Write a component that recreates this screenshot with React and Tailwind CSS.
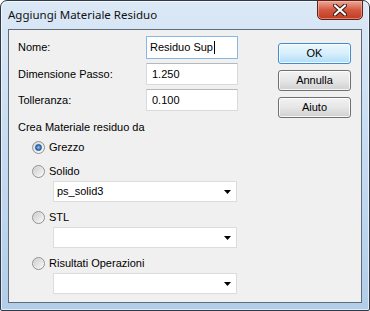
import React from "react";

const ui = { fontFamily: '"Liberation Sans", Arial, sans-serif' };
const titleFont = { fontFamily: '"Noto Sans", "Open Sans", sans-serif' };

function Radio({ checked }) {
  return (
    <div className="w-[13px] h-[13px] rounded-full border border-[#8f9194] bg-linear-to-br from-[#d6d6d6] to-[#fbfbfb] flex items-center justify-center shrink-0">
      {checked ? (
        <div className="w-[7px] h-[7px] rounded-full border border-[#1f4d84] bg-radial from-[#8cc6f2] via-[#3d86cf] to-[#1e5fa8]" />
      ) : (
        <div className="w-[9px] h-[9px] rounded-full bg-linear-to-br from-[#cfcfcf] to-[#f6f6f6]" />
      )}
    </div>
  );
}

function Combo({ value }) {
  return (
    <div className="ml-[35px] w-[184px] h-[21px] bg-white border border-[#dcdcdc] flex items-center justify-between pl-[3px] pr-[5px]">
      <span className="text-[11px] text-black leading-none">{value}</span>
      <svg width="7" height="4" viewBox="0 0 7 4">
        <path d="M0 0H7L3.5 4Z" fill="#000" />
      </svg>
    </div>
  );
}

function Btn({ children, def }) {
  return (
    <div
      className={
        "w-[73px] h-[21px] rounded-[3px] border flex items-center justify-center text-[11px] text-black shadow-[inset_0_0_0_1px_rgba(255,255,255,0.8)] " +
        (def
          ? "border-[#3c8ed0] bg-linear-to-b from-[#ecf7fd] via-[#d6effc] to-[#b2dcf6]"
          : "border-[#707070] bg-linear-to-b from-[#f3f3f3] via-[#e6e6e6] to-[#d0d0d0]")
      }
    >
      {children}
    </div>
  );
}

export default function App() {
  return (
    <div className="w-[370px] h-[311px] overflow-hidden" style={ui}>
      <div className="w-[370px] h-[311px] flex flex-col border border-[#2f3a46] rounded-t-[7px] rounded-b-[2px] bg-linear-to-b from-[#dbe8f6] via-[#c5dbf1] to-[#b2cde9] shadow-[inset_0_0_0_1px_rgba(255,255,255,0.6)]">
        <div className="h-[28px] flex items-start justify-between">
          <div className="h-[28px] flex items-center pl-[7px] text-[11.5px] text-[#111]" style={titleFont}>
            Aggiungi Materiale Residuo
          </div>
          <div className="-mt-px mr-[6px] w-[46px] h-[20px] rounded-b-[5px] border border-[#5b2218] bg-linear-to-b from-[#e9a999] via-[#d3573f] to-[#c23b22] flex items-center justify-center shadow-[inset_0_0_0_1px_rgba(255,200,190,0.5)]">
            <svg width="14" height="12" viewBox="0 0 14 12">
              <path d="M2 1.5L12 10.5M12 1.5L2 10.5" stroke="#3b1a14" strokeWidth="4.2" strokeLinecap="round" />
              <path d="M2 1.5L12 10.5M12 1.5L2 10.5" stroke="#fff" strokeWidth="2.2" strokeLinecap="round" />
            </svg>
          </div>
        </div>
        <div className="mx-[7px] mb-[7px] flex-1 border border-[#5f6d7b] bg-[#f0f0f0] flex">
          <div className="flex-1 flex flex-col pl-[9px] pt-[6px]">
            <div className="grid grid-cols-[128px_92px] gap-y-[4px] items-center text-[11px] text-black">
              <span>Nome:</span>
              <div className="h-[23px] bg-white border border-[#86b8e6] flex items-center pl-[3px]">
                <span>Residuo Sup</span>
                <span className="w-px h-[13px] bg-black ml-px" />
              </div>
              <span>Dimensione Passo:</span>
              <div className="h-[22px] bg-white border border-[#dadada] border-t-[#b9b9b9] flex items-center pl-[5px]">
                1.250
              </div>
              <span>Tolleranza:</span>
              <div className="h-[22px] bg-white border border-[#dadada] border-t-[#b9b9b9] flex items-center pl-[5px]">
                0.100
              </div>
            </div>
            <div className="mt-[10px] h-[13px] flex items-center text-[11px] text-black">
              Crea Materiale residuo da
            </div>
            <div className="mt-[5px] h-[16px] flex items-center gap-[4px] ml-[14px] text-[11px] text-black">
              <Radio checked />
              <span>Grezzo</span>
            </div>
            <div className="mt-[8px] h-[16px] flex items-center gap-[4px] ml-[14px] text-[11px] text-black">
              <Radio />
              <span>Solido</span>
            </div>
            <div className="mt-[2px]">
              <Combo value="ps_solid3" />
            </div>
            <div className="mt-[7px] h-[16px] flex items-center gap-[4px] ml-[14px] text-[11px] text-black">
              <Radio />
              <span>STL</span>
            </div>
            <div className="mt-[2px]">
              <Combo value="" />
            </div>
            <div className="mt-[7px] h-[16px] flex items-center gap-[4px] ml-[14px] text-[11px] text-black">
              <Radio />
              <span>Risultati Operazioni</span>
            </div>
            <div className="mt-[2px]">
              <Combo value="" />
            </div>
          </div>
          <div className="flex flex-col gap-[6px] pt-[13px] pr-[10px]">
            <Btn def>OK</Btn>
            <Btn>Annulla</Btn>
            <Btn>Aiuto</Btn>
          </div>
        </div>
      </div>
    </div>
  );
}
